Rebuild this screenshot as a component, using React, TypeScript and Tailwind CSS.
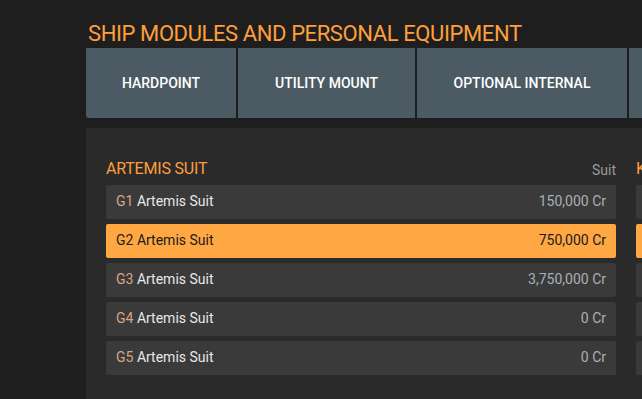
const tabs = [
  { label: "HARDPOINT", w: "w-[150px]" },
  { label: "UTILITY MOUNT", w: "w-[177px]" },
  { label: "OPTIONAL INTERNAL", w: "w-[210px]" },
  { label: "CORE INTERNAL", w: "w-[180px]" },
];

const rows = [
  { grade: "G1", name: "Artemis Suit", price: "150,000 Cr" },
  { grade: "G2", name: "Artemis Suit", price: "750,000 Cr", active: true },
  { grade: "G3", name: "Artemis Suit", price: "3,750,000 Cr" },
  { grade: "G4", name: "Artemis Suit", price: "0 Cr" },
  { grade: "G5", name: "Artemis Suit", price: "0 Cr" },
];

const Row = ({ grade, name, price, active }: any) => (
  <div
    className={
      active
        ? "flex h-[34px] items-center justify-between rounded-[2px] bg-[#ffa843] px-[10px] pb-[2px] text-[14px] text-[#1a1a1a]"
        : "flex h-[34px] items-center justify-between rounded-[2px] bg-[#3a3a3a] px-[10px] pb-[2px] text-[14px] text-[#e8e8e8]"
    }
  >
    <span>
      <span className={active ? "text-[#2a2218]" : "text-[#d6a484]"}>{grade}</span> {name}
    </span>
    <span className={active ? "text-[#1a1a1a]" : "text-[#a9b0b5]"}>{price}</span>
  </div>
);

const Section = ({ title, kind, items }: any) => (
  <div className="w-[510px] shrink-0">
    <div className="flex h-[28px] items-end justify-between pb-[4px]">
      <span className="text-[16px] tracking-[-0.2px] text-[#ff9f3a]">{title}</span>
      <span className="text-[14px] text-[#9a9a9a]">{kind}</span>
    </div>
    <div className="flex flex-col gap-[5px]">
      {items.map((r: any) => (
        <Row key={r.grade} {...r} />
      ))}
    </div>
  </div>
);

export default function App() {
  return (
    <div
      className="h-[399px] w-[642px] overflow-hidden bg-[#1e1e1e]"
      style={{ fontFamily: "Roboto, 'Liberation Sans', sans-serif" }}
    >
      <div className="ml-[86px] w-[1000px] pt-[19px]">
        <h1 className="pl-[2px] text-[22px] leading-[29px] tracking-[-0.4px] text-[#ff9f3a]">
          SHIP MODULES AND PERSONAL EQUIPMENT
        </h1>
        <div className="flex h-[70px] gap-[2px] overflow-hidden rounded-bl-[3px]">
          {tabs.map((t) => (
            <div
              key={t.label}
              className={`${t.w} flex shrink-0 items-center justify-center bg-[#4b5a63] text-[14px] font-medium text-white`}
            >
              {t.label}
            </div>
          ))}
        </div>
        <div className="mt-[10px] flex h-[300px] gap-[20px] bg-[#2a2a2a] px-[20px] pt-[29px]">
          <Section title="ARTEMIS SUIT" kind="Suit" items={rows} />
          <Section title="KARMA" kind="Weapon" items={rows} />
        </div>
      </div>
    </div>
  );
}
